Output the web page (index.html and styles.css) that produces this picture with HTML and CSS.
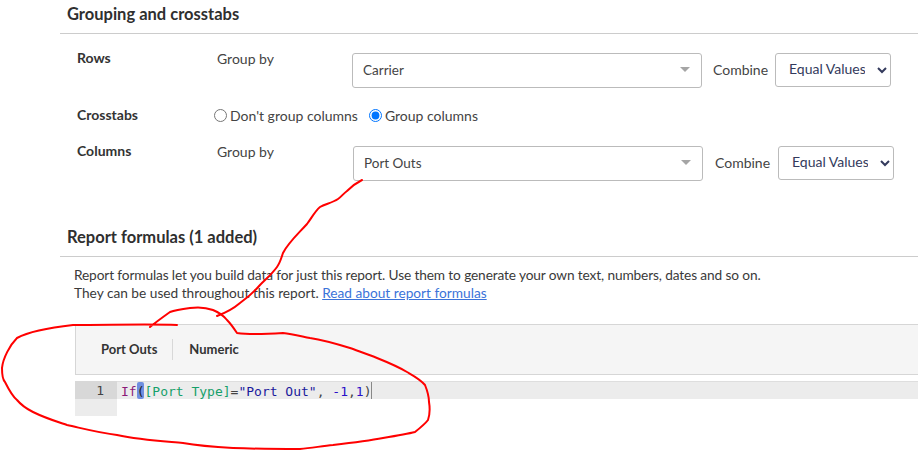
FILE: index.html
```html
<!DOCTYPE html>
<html lang="en">
<head>
<meta charset="utf-8">
<title>Report settings</title>
<link rel="stylesheet" href="styles.css">
</head>
<body>
<main class="page">
  <section class="section section-grouping">
    <h2 class="section-title">Grouping and crosstabs</h2>
    <div class="grouping-body">
      <div class="row row-rows">
        <div class="row-label">Rows</div>
        <div class="row-field">Group by</div>
        <div class="picker"><span class="picker-text">Carrier</span><i class="picker-arrow"></i></div>
        <label class="combine">Combine</label>
        <select class="native-select"><option>Equal Values</option></select>
      </div>
      <div class="row row-crosstabs">
        <div class="row-label">Crosstabs</div>
        <label class="radio radio-first"><input type="radio" name="ct">Don't group columns</label>
        <label class="radio"><input type="radio" name="ct" checked>Group columns</label>
      </div>
      <div class="row row-columns">
        <div class="row-label">Columns</div>
        <div class="row-field row-field-wide">Group by</div>
        <div class="picker"><span class="picker-text">Port Outs</span><i class="picker-arrow"></i></div>
        <label class="combine">Combine</label>
        <select class="native-select"><option>Equal Values</option></select>
      </div>
    </div>
  </section>
  <section class="section section-formulas">
    <h2 class="section-title">Report formulas (1 added)</h2>
    <p class="intro"><span class="intro-first">Report formulas let you build data for just this report. Use them to generate your own text, numbers, dates and so on.</span><br>They can be used throughout this report. <a href="#">Read about report formulas</a></p>
    <div class="editor">
      <div class="toolbar">
        <span class="tool tool-name">Port Outs</span>
        <span class="tool tool-type">Numeric</span>
      </div>
      <div class="code">
        <div class="gutter"><div class="line-no">1</div></div>
        <div class="code-line"><span class="c-fn">If</span><span class="c-match">(</span><span class="c-field">[Port Type]</span>=<span class="c-str">"Port Out"</span>, <span class="c-num">-1</span>,<span class="c-num">1</span>)<span class="caret"></span></div>
      </div>
    </div>
  </section>
</main>
<svg class="ink" width="918" height="450" viewBox="0 0 918 450" fill="none" stroke="#f00" stroke-width="2" stroke-linecap="round" stroke-linejoin="round" aria-hidden="true">
  <path d="M177 325 C150 324 110 325 73 325 C55 327 30 331 17 338 C10 345 3 358 2 368 C2 376 3 380 5 382 C9 390 12 396 17 400 C22 406 27 409 33 412 C45 418 55 421 67 425 C85 429 100 433 117 435 C140 440 160 441 183 443 C200 446 215 447 233 448 C260 449 280 449 300 449 C312 448 322 446 333 445 C350 443 367 441 383 438 C395 436 407 434 415 432 C420 428 425 424 428 420 C430 414 430 408 429 402 C429 395 427 390 425 385 C420 379 414 376 407 372 C397 366 387 362 377 358 C367 354 358 351 350 348 C337 344 323 340 310 338 C300 336 292 334 283 333 C268 334 250 335 237 333 C233 327 231 324 227 320 C223 315 218 312 213 310 C205 307 197 307 190 308 C182 309 175 310 170 312 C163 317 156 322 150 327"/>
  <path d="M362 180 C356 183 351 187 347 191 C343 194 341 197 338 199 C332 203 325 204 320 207 C315 211 311 219 307 224 C297 235 288 243 283 253 C281 259 280 263 277 267 C272 274 266 279 260 285 C254 292 247 298 240 303 C233 309 225 313 217 316"/>
</svg>
</body>
</html>
```

FILE: styles.css
```css
* { box-sizing: border-box; }
html, body { margin: 0; padding: 0; }
body {
  width: 918px;
  height: 450px;
  overflow: hidden;
  background: #fff;
  color: #333;
  font-family: Lato, "Liberation Sans", sans-serif;
  font-size: 14px;
  line-height: 18px;
  position: relative;
}
.page { padding-left: 60px; }
.section-title {
  margin: 0;
  padding: 4px 0 9px 7px;
  height: 34px;
  font-size: 16.5px;
  line-height: 20px;
  font-weight: 700;
  color: #2f2f2f;
  border-bottom: 1px solid #ccc;
}
.grouping-body { padding: 19px 0 0 17px; }
.row { display: flex; align-items: flex-start; }
.row-rows { height: 53px; }
.row-crosstabs { height: 40px; }
.row-columns { height: 44px; }
.row-label {
  width: 140px;
  flex: none;
  font-weight: 700;
  color: #333;
}
.row-rows .row-label, .row-columns .row-label { margin-top: -4px; }
.row-field { width: 135px; flex: none; margin-top: -3px; color: #444; }
.row-field-wide { width: 136px; }
.picker {
  width: 350px;
  height: 35px;
  flex: none;
  display: flex;
  align-items: center;
  justify-content: space-between;
  padding: 0 11px 0 10px;
  background: #fff;
  border: 1px solid #bbb;
  border-radius: 3px;
  color: #444;
}
.picker-text { margin-top: -2px; font-size: 13.5px; }
.picker-arrow {
  width: 0;
  height: 0;
  margin-top: -2px;
  border-left: 5px solid transparent;
  border-right: 5px solid transparent;
  border-top: 5px solid #a5a5a5;
}
.combine { flex: none; width: 62px; margin-left: 11px; line-height: 33px; color: #444; }
.row-columns .combine { width: 63px; margin-left: 12px; }
.native-select {
  width: 116px;
  height: 34px;
  flex: none;
  padding: 0 9px 3px;
  font: inherit;
  color: #333a5c;
  background: #fff;
  border: 1px solid #bbb;
  border-radius: 3px;
}
.radio { display: inline-flex; align-items: center; margin-top: 1px; color: #444; white-space: nowrap; }
.radio input { width: 13px; height: 13px; margin: -2px 3px 0 0; accent-color: #0075ff; }
.radio-first { margin-right: 11px; margin-left: -3px; }
.section-formulas { margin-top: 33px; }
.intro { margin: 9px 0 0 14px; font-size: 13.7px; color: #3a3a3a; }
.intro-first { letter-spacing: -0.125px; }
.intro a { color: #3b73d9; }
.editor { margin: 22px 0 0 15px; }
.toolbar {
  height: 51px;
  display: flex;
  align-items: center;
  padding-left: 10px;
  background: #f5f5f5;
  border: 1px solid #d6d6d6;
  border-width: 1px 0 1px 1px;
  font-size: 13px;
  font-weight: 700;
  color: #333;
}
.tool { padding: 0 15px; line-height: 21px; }
.tool-name { padding-right: 15px; border-right: 1px solid #d8d8d8; }
.tool-type { padding-left: 16px; }
.code {
  display: flex;
  align-items: flex-start;
  margin-top: 6px;
  font-family: "DejaVu Sans Mono", monospace;
  font-size: 13px;
  line-height: 19px;
}
.gutter { width: 42px; height: 35px; flex: none; background: #ececec; }
.line-no { height: 18px; padding-right: 13px; text-align: right; background: #d8d8d8; color: #444; }
.code-line {
  flex: 1;
  height: 18px;
  padding-left: 4px;
  background: #ececec;
  border-top: 1px solid #dedede;
  white-space: pre;
  color: #444;
  display: flex;
}
.c-fn { color: #8b1a78; }
.c-match { height: 17px; background: #6f8fe0; border-radius: 2px; color: #222; }
.c-field { color: #16a06a; }
.c-str { color: #1a1a9c; }
.c-num { color: #2a10c8; }
.caret { width: 1px; height: 17px; background: #888; }
.ink { position: absolute; left: 0; top: 0; pointer-events: none; }
```
